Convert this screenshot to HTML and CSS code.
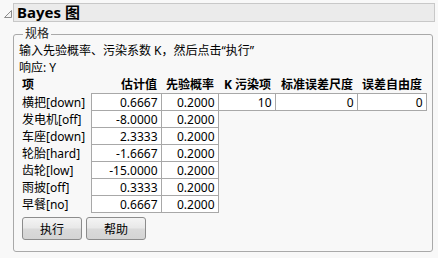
FILE: index.html
```html
<!DOCTYPE html>
<html lang="zh-CN">
<head>
    <meta charset="UTF-8">
    <title>Bayes 图</title>
    <link rel="stylesheet" href="styles.css">
</head>
<body>
    <div class="report">
        <div class="outline-head">
            <svg class="toggle" width="10" height="10" viewBox="0 0 10 10">
                <polygon points="8.5,1.5 8.5,8.5 1.5,8.5" fill="#f4f4f4" stroke="#8c8c8c" stroke-width="1"/>
            </svg>
            <div class="outline-title">Bayes 图</div>
        </div>

        <fieldset class="group">
            <legend>规格</legend>
            <p class="note">输入先验概率、污染系数 K，然后点击“执行”</p>
            <p class="note">响应: Y</p>

            <div class="spec">
                <table class="spec-table">
                    <colgroup>
                        <col class="c-term">
                        <col class="c-est">
                        <col class="c-prior">
                        <col class="c-k">
                        <col class="c-std">
                        <col class="c-df">
                    </colgroup>
                    <thead>
                        <tr>
                            <th class="left">项</th>
                            <th>估计值</th>
                            <th>先验概率</th>
                            <th>K 污染项</th>
                            <th>标准误差尺度</th>
                            <th>误差自由度</th>
                        </tr>
                    </thead>
                    <tbody>
                        <tr>
                            <td class="term">横把[down]</td>
                            <td class="box">0.6667</td>
                            <td class="box">0.2000</td>
                            <td class="box">10</td>
                            <td class="box">0</td>
                            <td class="box">0</td>
                        </tr>
                        <tr><td class="term">发电机[off]</td><td class="box">-8.0000</td><td class="box">0.2000</td><td></td><td></td><td></td></tr>
                        <tr><td class="term">车座[down]</td><td class="box">2.3333</td><td class="box">0.2000</td><td></td><td></td><td></td></tr>
                        <tr><td class="term">轮胎[hard]</td><td class="box">-1.6667</td><td class="box">0.2000</td><td></td><td></td><td></td></tr>
                        <tr><td class="term">齿轮[low]</td><td class="box">-15.0000</td><td class="box">0.2000</td><td></td><td></td><td></td></tr>
                        <tr><td class="term">雨披[off]</td><td class="box">0.3333</td><td class="box">0.2000</td><td></td><td></td><td></td></tr>
                        <tr><td class="term">早餐[no]</td><td class="box">0.6667</td><td class="box">0.2000</td><td></td><td></td><td></td></tr>
                    </tbody>
                </table>

                <div class="actions">
                    <button class="btn">执行</button>
                    <button class="btn">帮助</button>
                </div>
            </div>
        </fieldset>
    </div>
</body>
</html>
```

FILE: styles.css
```css
body {
    margin: 0;
    background: #f8f8f8;
    font-family: "Noto Sans", "Noto Sans CJK SC", sans-serif;
    font-size: 12px;
    color: #000;
}

.report {
    padding: 3px 3px 0 3px;
}

.outline-head {
    display: flex;
    align-items: flex-end;
    gap: 0;
}

.toggle {
    width: 10px;
    height: 10px;
    margin-bottom: 3px;
}

.outline-title {
    flex: 1;
    height: 17px;
    line-height: 17px;
    border: 1px solid #c8c8c8;
    background: #ebebeb;
    padding-left: 3px;
    font-size: 15px;
    font-weight: bold;
}

.group {
    margin: 5px 3px 0 10px;
    padding: 1px 5px 11px 5px;
    border: 1px solid #a9a9a9;
    border-radius: 3px;
}

.group legend {
    padding: 0 2px;
    margin-left: 4px;
    line-height: 14px;
    color: #222;
}

.note {
    margin: 0;
    line-height: 17px;
}

.spec {
    margin-left: 3px;
}

.spec-table {
    border-collapse: collapse;
    table-layout: fixed;
    width: 404px;
}

.c-term { width: 69px; }
.c-est { width: 70px; }
.c-prior { width: 57px; }
.c-k { width: 57px; }
.c-std { width: 82px; }
.c-df { width: 69px; }

.spec-table th {
    font-weight: bold;
    text-align: right;
    padding: 0 4px 0 0;
    height: 17px;
    line-height: 16px;
    white-space: nowrap;
}

.spec-table th.left {
    text-align: left;
    padding-left: 0;
}

.spec-table td {
    height: 16px;
    line-height: 15px;
    padding: 0 3px 0 0;
    white-space: nowrap;
}

.spec-table td.term {
    padding: 0;
}

.spec-table td.box {
    background: #fff;
    border: 1px solid #a8a8a8;
    text-align: right;
}

.actions {
    display: flex;
    gap: 4px;
    margin-top: 4px;
}

.btn {
    width: 60px;
    height: 23px;
    padding: 0;
    border: 1px solid #8c8c8c;
    border-radius: 3px;
    background: linear-gradient(#f4f4f4, #e8e8e8 48%, #dadada 52%, #d4d4d4);
    font-family: "Noto Sans CJK SC", sans-serif;
    font-size: 12px;
    color: #000;
}
```
